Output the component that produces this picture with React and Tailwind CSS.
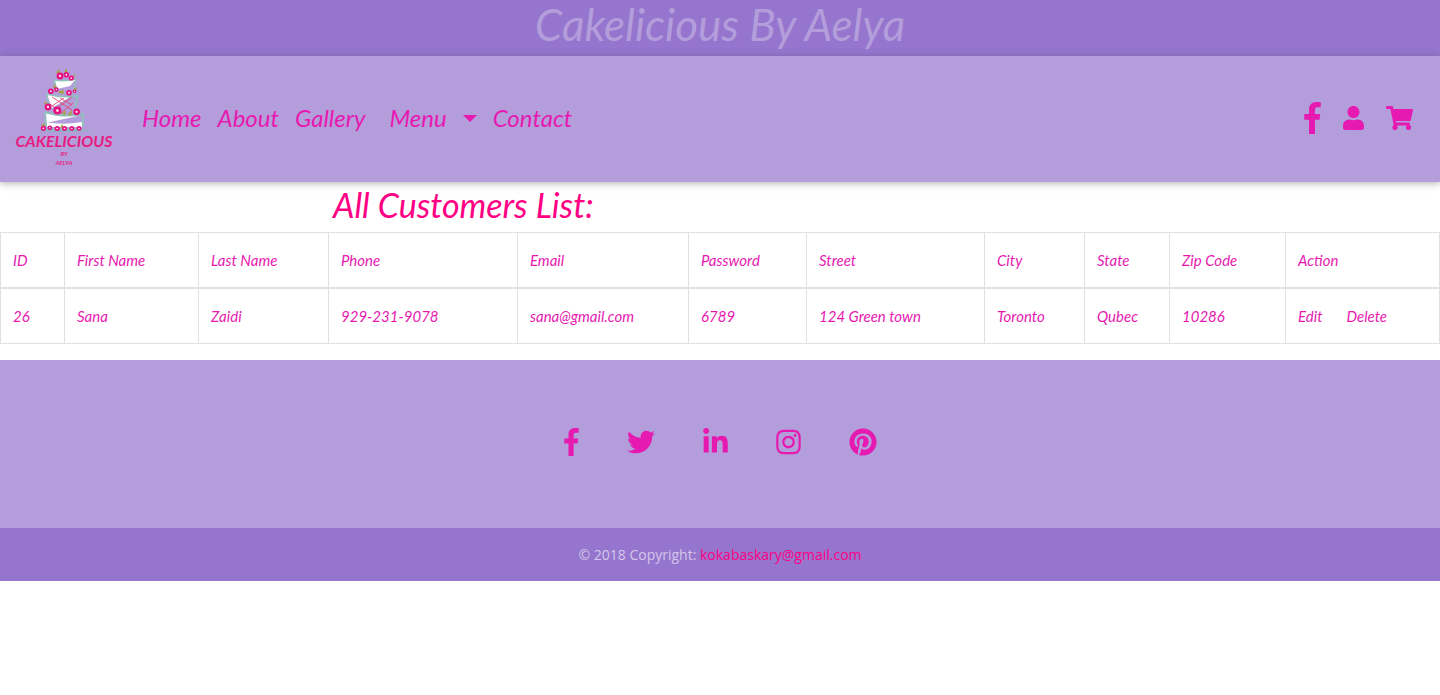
import { FaUser, FaShoppingCart, FaTwitter, FaLinkedinIn, FaInstagram, FaPinterest } from "react-icons/fa";

const columns = [
  { name: "ID", width: "w-[64px]", value: "26" },
  { name: "First Name", width: "w-[134px]", value: "Sana" },
  { name: "Last Name", width: "w-[130px]", value: "Zaidi" },
  { name: "Phone", width: "w-[189px]", value: "929-231-9078" },
  { name: "Email", width: "w-[171px]", value: "sana@gmail.com" },
  { name: "Password", width: "w-[118px]", value: "6789" },
  { name: "Street", width: "w-[178px]", value: "124 Green town" },
  { name: "City", width: "w-[100px]", value: "Toronto" },
  { name: "State", width: "w-[85px]", value: "Qubec" },
  { name: "Zip Code", width: "w-[116px]", value: "10286" },
];

const roses = [
  [60, 20, 3.4], [66.3, 18.8, 2.8], [71.3, 22, 2.6],
  [50.8, 35.3, 2.8], [56.4, 33.6, 2.3], [69, 36.8, 2.8], [74.5, 35.3, 1.8],
  [48, 51, 3.4], [57.4, 54.6, 4], [76.6, 55.8, 3.4],
  [43.4, 72.3, 2.6], [49.8, 71.8, 2.4], [57.2, 72.5, 2.6], [64.5, 72.5, 2.5], [71.8, 72.5, 2.4], [79, 72.5, 2.4],
];

const leaves = ["M56 17l3-4 1 4z", "M64 15l3-2 0 4z", "M73 19l3-1-2 3z", "M53 32l2-4 1 4z", "M58 37l3-3 2 4z", "M61 36l2-3 1 5z", "M74 33l3-2-1 4z", "M44 48l2-3 1 4z", "M62 58l3-4 1 5z", "M68 58l4-4-1 6z", "M41 70l3-3 1 3z", "M60 71l3-3 0 4z"];

function Logo() {
  return (
    <svg viewBox="0 0 130 126" className="h-[126px] w-[130px]" role="img" aria-label="Cakelicious by Aelya">
      <path d="M37 74.5Q64 71 93 74.5Q64 77 37 74.5z" fill="#86b8bd" />
      <path d="M54 24Q65 26 75.500 23.500L73 37L57 36z" fill="#b39ddb" />
      <path d="M54.500 24.500Q65 26 76 23L70 30L57 33z" fill="#fff" />
      <path d="M54 24L57.500 36M76 23.500L73 38M54 24Q65 26 76 23" fill="none" stroke="#91bfbc" strokeWidth="1.6" />
      <path d="M46.500 38Q61 42 77.500 40L74 56L50 55z" fill="#b39ddb" />
      <path d="M47 38.500Q57 41 70 41L52 52z" fill="#fff" />
      <path d="M46.500 38Q61 42 77.500 40L74 57M46.500 38L50 54" fill="none" stroke="#91bfbc" strokeWidth="1.8" />
      <path d="M52 41l20 13M60 42l12 7M50 48l12 9M72 41L53 55M64 42L52 50M73 47L61 57" stroke="#e34872" strokeWidth=".9" fill="none" />
      <path d="M45 57Q63 62 83 58L82.500 71H46z" fill="#b39ddb" />
      <path d="M45 57Q61 61 80 59.500L46 67z" fill="#fff" />
      <path d="M47 66.500Q65 69 82 66V71H47z" fill="#fff" />
      <path d="M45 56Q63 62 83 58V70M45 56L46 70" fill="none" stroke="#91bfbc" strokeWidth="2" />
      {leaves.map((d) => <path key={d} d={d} fill="#a5a23c" />)}
      {roses.map(([x, y, r]) => (
        <g key={`${x}-${y}`}>
          <circle cx={x} cy={y} r={r} fill="#e5127f" />
          <circle cx={x} cy={y} r={r / 3} fill="#ffe5f2" />
        </g>
      ))}
      <g fill="#e61c80" fontFamily="Lato, sans-serif" fontStyle="italic" fontWeight="700" textAnchor="middle">
        <text x="64" y="91" fontSize="16">CAKELICIOUS</text>
        <text x="64" y="100" fontSize="6">BY</text>
        <text x="64" y="109" fontSize="6">AELYA</text>
      </g>
    </svg>
  );
}

function FacebookIcon({ className }) {
  return (
    <svg viewBox="0 0 264 512" fill="currentColor" className={className} aria-hidden="true">
      <path d="M76.7 512V283H0v-91h76.7v-71.7C76.7 42.4 124.3 0 193.8 0c33.3 0 61.9 2.5 70.2 3.6V85h-48.2c-37.8 0-45.1 18-45.1 44.3V192H256l-11.7 91h-73.6v229" />
    </svg>
  );
}

export default function App() {
  return (
    <div className="bg-white font-[Lato,sans-serif] text-[#e61ab0]">
      <header className="h-14 bg-[#9575cd] text-center">
        <h1 className="text-[44px] leading-[48px] italic text-[#b39ddb]">Cakelicious By Aelya</h1>
      </header>

      <nav className="relative flex items-center bg-[#b39ddb] pr-[27px] shadow-[0_2px_5px_0_rgba(0,0,0,0.16),0_2px_10px_0_rgba(0,0,0,0.12)]">
        <a href="#home"><Logo /></a>
        <div className="flex flex-1 items-center gap-4 pb-[2px] pl-3 text-[24px] leading-9 italic">
          <a href="#home">Home</a>
          <a href="#about">About</a>
          <a href="#gallery">Gallery</a>
          <button type="button" className="flex items-center gap-4 pl-2 italic">
            Menu
            <svg viewBox="0 0 14 7" fill="currentColor" className="h-[7px] w-[14px]" aria-hidden="true"><path d="M0 0h14L7 7z" /></svg>
          </button>
          <a href="#contact">Contact</a>
        </div>
        <div className="flex items-center gap-[22px] pb-[2px]">
          <a href="#facebook" aria-label="Facebook"><FacebookIcon className="h-8 w-[17px]" /></a>
          <a href="#account" aria-label="Account"><FaUser className="h-6 w-[21px]" /></a>
          <a href="#cart" aria-label="Cart"><FaShoppingCart className="h-6 w-[27px]" /></a>
        </div>
      </nav>

      <main className="pb-4">
        <h2 className="pb-1 pl-[333px] text-[34px] leading-[46px] italic text-[#ff0084]">All Customers List:</h2>
        <table className="w-full table-fixed border-collapse border border-[#dee2e6] text-left text-[15px] leading-6 italic">
          <thead>
            <tr className="h-[55px] border-b-2 border-[#dee2e6]">
              {columns.map((c) => (
                <th key={c.name} scope="col" className={`${c.width} border-x border-[#dee2e6] px-3 font-normal`}>{c.name}</th>
              ))}
              <th scope="col" className="border-x border-[#dee2e6] px-3 font-normal">Action</th>
            </tr>
          </thead>
          <tbody>
            <tr className="h-14">
              {columns.map((c) => (
                <td key={c.name} className="border-x border-[#dee2e6] px-3">{c.value}</td>
              ))}
              <td className="border-x border-[#dee2e6] px-3">
                <div className="flex gap-6">
                  <a href="#edit">Edit</a>
                  <a href="#delete">Delete</a>
                </div>
              </td>
            </tr>
          </tbody>
        </table>
      </main>

      <footer>
        <div className="flex items-center justify-center gap-12 bg-[#b39ddb] pt-[68px] pb-[72px]">
          <a href="#facebook" aria-label="Facebook"><FacebookIcon className="h-7 w-[15px]" /></a>
          <a href="#twitter" aria-label="Twitter"><FaTwitter className="size-7" /></a>
          <a href="#linkedin" aria-label="LinkedIn"><FaLinkedinIn className="h-7 w-[25px]" /></a>
          <a href="#instagram" aria-label="Instagram"><FaInstagram className="h-7 w-[25px]" /></a>
          <a href="#pinterest" aria-label="Pinterest"><FaPinterest className="size-7" /></a>
        </div>
        <div className="bg-[#9575cd] py-4 text-center font-['Open_Sans',sans-serif] text-sm leading-[21px] text-white/60">
          © 2018 Copyright: <a href="#mail" className="text-[#ff0084]">kokabaskary@gmail.com</a>
        </div>
      </footer>
    </div>
  );
}
